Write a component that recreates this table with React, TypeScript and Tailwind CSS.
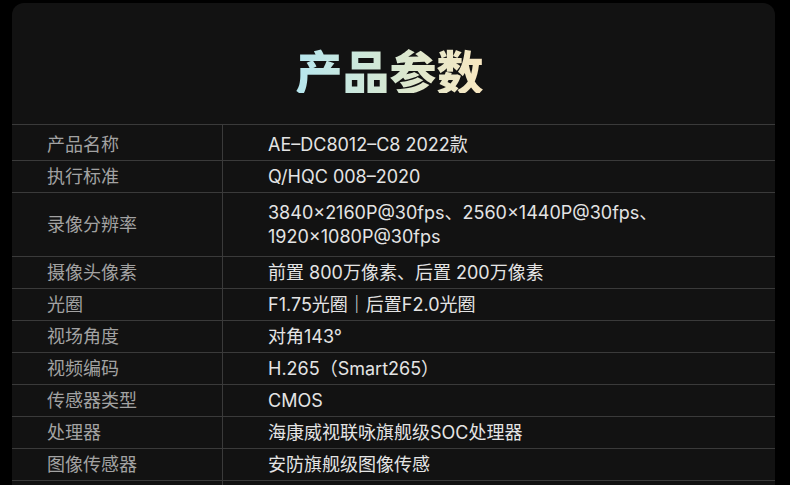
const specs: { label: string; value: React.ReactNode; first?: boolean; tall?: boolean }[] = [
  { label: '产品名称', value: 'AE–DC8012–C8 2022款', first: true },
  { label: '执行标准', value: 'Q/HQC 008–2020' },
  {
    label: '录像分辨率',
    value: (
      <>
        3840×2160P@30fps、2560×1440P@30fps、
        <br />
        1920×1080P@30fps
      </>
    ),
    tall: true,
  },
  { label: '摄像头像素', value: '前置 800万像素、后置 200万像素' },
  { label: '光圈', value: 'F1.75光圈｜后置F2.0光圈' },
  { label: '视场角度', value: '对角143°' },
  { label: '视频编码', value: 'H.265（Smart265）' },
  { label: '传感器类型', value: 'CMOS' },
  { label: '处理器', value: '海康威视联咏旗舰级SOC处理器' },
  { label: '图像传感器', value: '安防旗舰级图像传感' },
];

export default function App() {
  return (
    <div className="min-h-screen bg-black pl-3 pr-[15px] pt-[3px] font-['Inter','Noto_Sans_CJK_SC',sans-serif]">
      <div className="rounded-t-xl bg-[#121212]">
        {/* Title */}
        <div className="flex h-[121px] items-center justify-center pr-2 pt-[12px]">
          <h1 className="bg-gradient-to-r from-[#b6e6ee] via-[#d6e8d2] to-[#f9e7c0] bg-clip-text text-[47px] font-black leading-none text-transparent font-['Noto_Sans_CJK_SC',sans-serif]">
            产品参数
          </h1>
        </div>

        {/* Spec table */}
        <div className="text-[18px] leading-6">
          {specs.map((row) => {
            const pad = row.first ? 'pt-[8px] pb-[3px]' : row.tall ? 'pt-[8px] pb-[7px]' : 'pt-[4px] pb-[3px]';
            return (
              <div key={row.label} className="grid grid-cols-[211px_1fr] border-t border-[#3a3a3a]">
                <div className={`flex items-center border-r border-[#3a3a3a] pl-[35px] text-[#a2a2a2] ${pad}`}>
                  {row.label}
                </div>
                <div className={`pl-[45px] text-[#e4e4e4] ${pad}`}>{row.value}</div>
              </div>
            );
          })}
          {/* next row continues below the fold */}
          <div className="grid h-8 grid-cols-[211px_1fr] border-t border-[#3a3a3a]">
            <div className="border-r border-[#3a3a3a]" />
            <div />
          </div>
        </div>
      </div>
    </div>
  );
}
